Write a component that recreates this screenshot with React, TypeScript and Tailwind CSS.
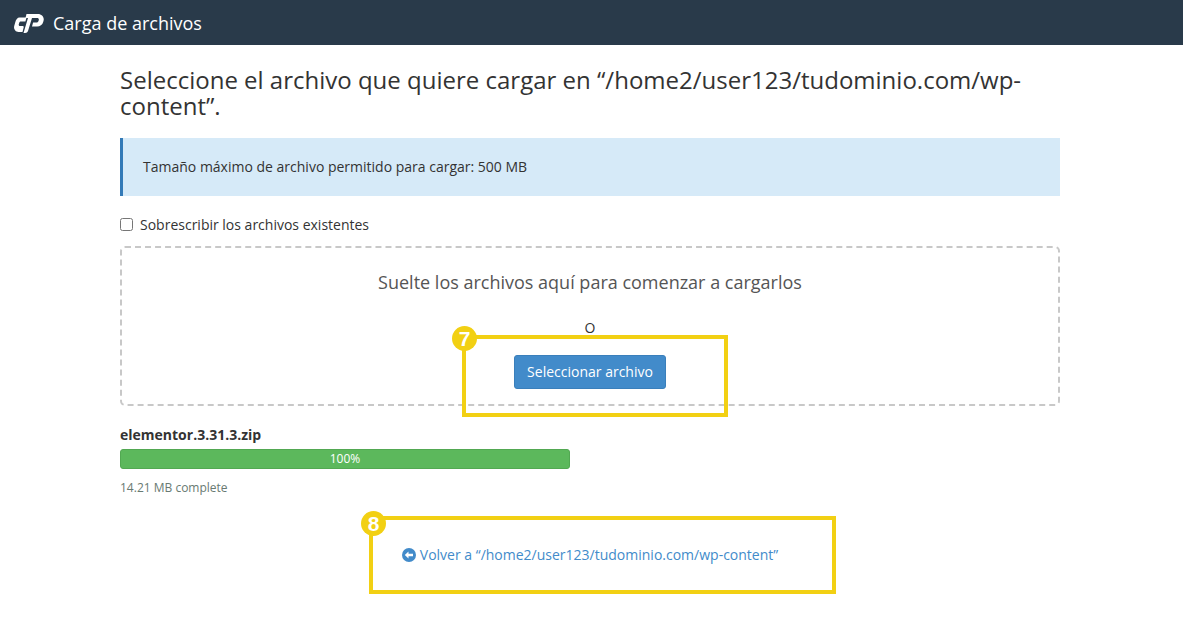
export default function App() {
  return (
    <div className="relative min-h-[624px] bg-white text-[14px] text-[#333333]" style={{ fontFamily: '"Open Sans", sans-serif' }}>
      <header className="flex h-[45px] items-center bg-[#293a4a] pl-[14px] text-white">
        <svg width="30" height="20" viewBox="0 0 30 20" fill="#fff" className="mr-[9px] mt-[1px]">
          <path d="M5.500 4.500H12.500L11.400 8.500H7c-.9 0-1.500.5-1.800 1.400l-.4 1.300c-.3 1 .3 1.800 1.400 1.800H8.800c.7 0 1.100.6.9 1.200L8.500 19H4.500C1.500 19-.6 16 .2 13l1-3.500C1.800 6.500 3.500 4.500 5.500 4.500z" />
          <path d="M12.500 1H24c3.500 0 6.500 3 5.600 6.500l-.4 1.500c-.8 2.800-3.200 4.500-6 4.500H18l1.100-4h3.400c1 0 1.800-.6 2-1.500l.3-1c.3-1.100-.4-2-1.500-2H18L14 18c-.4 1.300-1.400 2-2.800 2H9.500L14 5H11.500z" />
        </svg>
        <span className="mt-[1px] text-[18px]">Carga de archivos</span>
      </header>

      <main className="ml-[120px] w-[940px]">
        <h1 className="mt-[22px] text-[24px] leading-[26px] font-normal">
          Seleccione el archivo que quiere cargar en “/home2/user123/tudominio.com/wp-content”.
        </h1>

        <div className="mt-[19px] flex h-[58px] items-center border-l-[3px] border-[#337ab7] bg-[#d6eaf8] pb-[2px] pl-[20px] text-[14px]">
          Tamaño máximo de archivo permitido para cargar: 500 MB
        </div>

        <label className="mt-[18px] flex h-[20px] items-center">
          <input type="checkbox" className="m-0 mr-[7px] h-[13px] w-[13px]" />
          <span>Sobrescribir los archivos existentes</span>
        </label>

        <div className="mt-[12px] flex h-[160px] flex-col items-center rounded-[5px] border-2 border-dashed border-[#c8c8c8]">
          <p className="mt-[22px] text-[18px] leading-[24px] text-[#555555]">Suelte los archivos aquí para comenzar a cargarlos</p>
          <p className="mt-[24px] text-[14px] leading-[20px]">O</p>
          <button className="mt-[17px] h-[34px] w-[152px] rounded-[3px] border border-[#3a7fbb] bg-[#428bca] pb-[2px] text-[14px] text-white">
            Seleccionar archivo
          </button>
        </div>

        <p className="mt-[19px] text-[14px] leading-[20px] font-bold">elementor.3.31.3.zip</p>
        <div className="mt-[4px] flex h-[20px] w-[450px] items-center justify-center rounded-[3px] border border-[#52a852] bg-[#5cb85c] text-[12px] text-white">
          100%
        </div>
        <p className="mt-[10px] text-[12px] leading-[18px] text-[#687a72]">14.21 MB complete</p>

        <a className="mt-[48px] flex items-center justify-center gap-[4px] text-[14px] leading-[20px] text-[#428bca]">
          <svg width="14" height="14" viewBox="0 0 14 14">
            <circle cx="7" cy="7" r="7" fill="#428bca" />
            <path d="M2.800 7 6.500 3.600v2.200h4.500v2.400H6.500v2.200z" fill="#fff" />
          </svg>
          Volver a “/home2/user123/tudominio.com/wp-content”
        </a>
      </main>

      <div className="absolute left-[462px] top-[335px] h-[82px] w-[266px] border-[4px] border-[#f2d013]" />
      <div className="absolute left-[452px] top-[326px] flex h-[25px] w-[25px] items-center justify-center rounded-full bg-[#f2d013] text-[21px] font-bold text-white" style={{ fontFamily: '"Liberation Sans", sans-serif' }}>7</div>
      <div className="absolute left-[369px] top-[516px] h-[78px] w-[467px] border-[4px] border-[#f2d013]" />
      <div className="absolute left-[361px] top-[511px] flex h-[25px] w-[25px] items-center justify-center rounded-full bg-[#f2d013] text-[21px] font-bold text-white" style={{ fontFamily: '"Liberation Sans", sans-serif' }}>8</div>
    </div>
  );
}
